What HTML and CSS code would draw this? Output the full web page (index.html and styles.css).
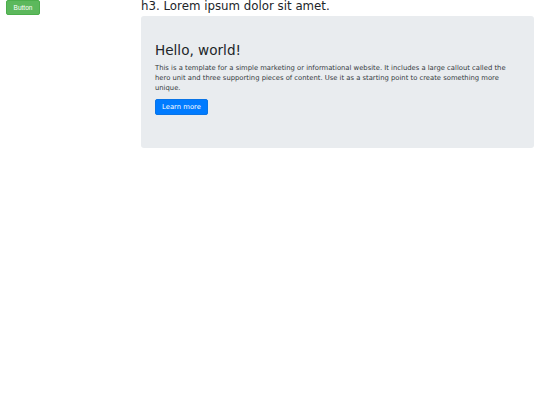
FILE: index.html
```html
<!DOCTYPE html>
<html>
<head>
<meta charset="utf-8">
<link rel="stylesheet" href="styles.css">
</head>
<body>
<div class="row">
  <div class="side">
    <button class="btn-green">Button</button>
  </div>
  <div class="main">
    <h3 class="title">h3. Lorem ipsum dolor sit amet.</h3>
    <div class="jumbo">
      <h1 class="hello">Hello, world!</h1>
      <p class="lead">This is a template for a simple marketing or informational website. It includes a large callout called the hero unit and three supporting pieces of content. Use it as a starting point to create something more unique.</p>
      <button class="btn-blue">Learn more</button>
    </div>
  </div>
</div>
</body>
</html>
```
FILE: styles.css
```css
html, body {
  margin: 0;
  padding: 0;
  background: #fff;
}
body {
  font-family: "DejaVu Sans", sans-serif;
  color: #212529;
}
.row {
  display: flex;
}
.side {
  width: 135px;
  padding-left: 6px;
}
.btn-green {
  font-family: "Liberation Sans", Arial, sans-serif;
  font-size: 6.5px;
  color: #fff;
  background: #5cb85c;
  border: 1px solid #4cae4c;
  border-radius: 2px;
  width: 34px;
  height: 15px;
  padding: 0;
  display: block;
}
.main {
  width: 393px;
}
.title {
  font-size: 11.8px;
  font-weight: normal;
  line-height: 16px;
  margin: -2px 0 2px 0;
  color: #212529;
}
.jumbo {
  background: #e9ecef;
  border-radius: 3px;
  padding: 26px 14px 33px 14px;
}
.hello {
  font-size: 13.6px;
  font-weight: normal;
  margin: 0 0 5px 0;
  line-height: 16px;
  color: #212529;
}
.lead {
  font-size: 6.8px;
  line-height: 10px;
  margin: 0 0 6px 0;
  color: #343a40;
}
.btn-blue {
  font-family: "DejaVu Sans", sans-serif;
  font-size: 6.8px;
  color: #fff;
  background: #007bff;
  border: 1px solid #0a74e6;
  border-radius: 2px;
  width: 53px;
  height: 16px;
  padding: 0;
  display: block;
}
```
